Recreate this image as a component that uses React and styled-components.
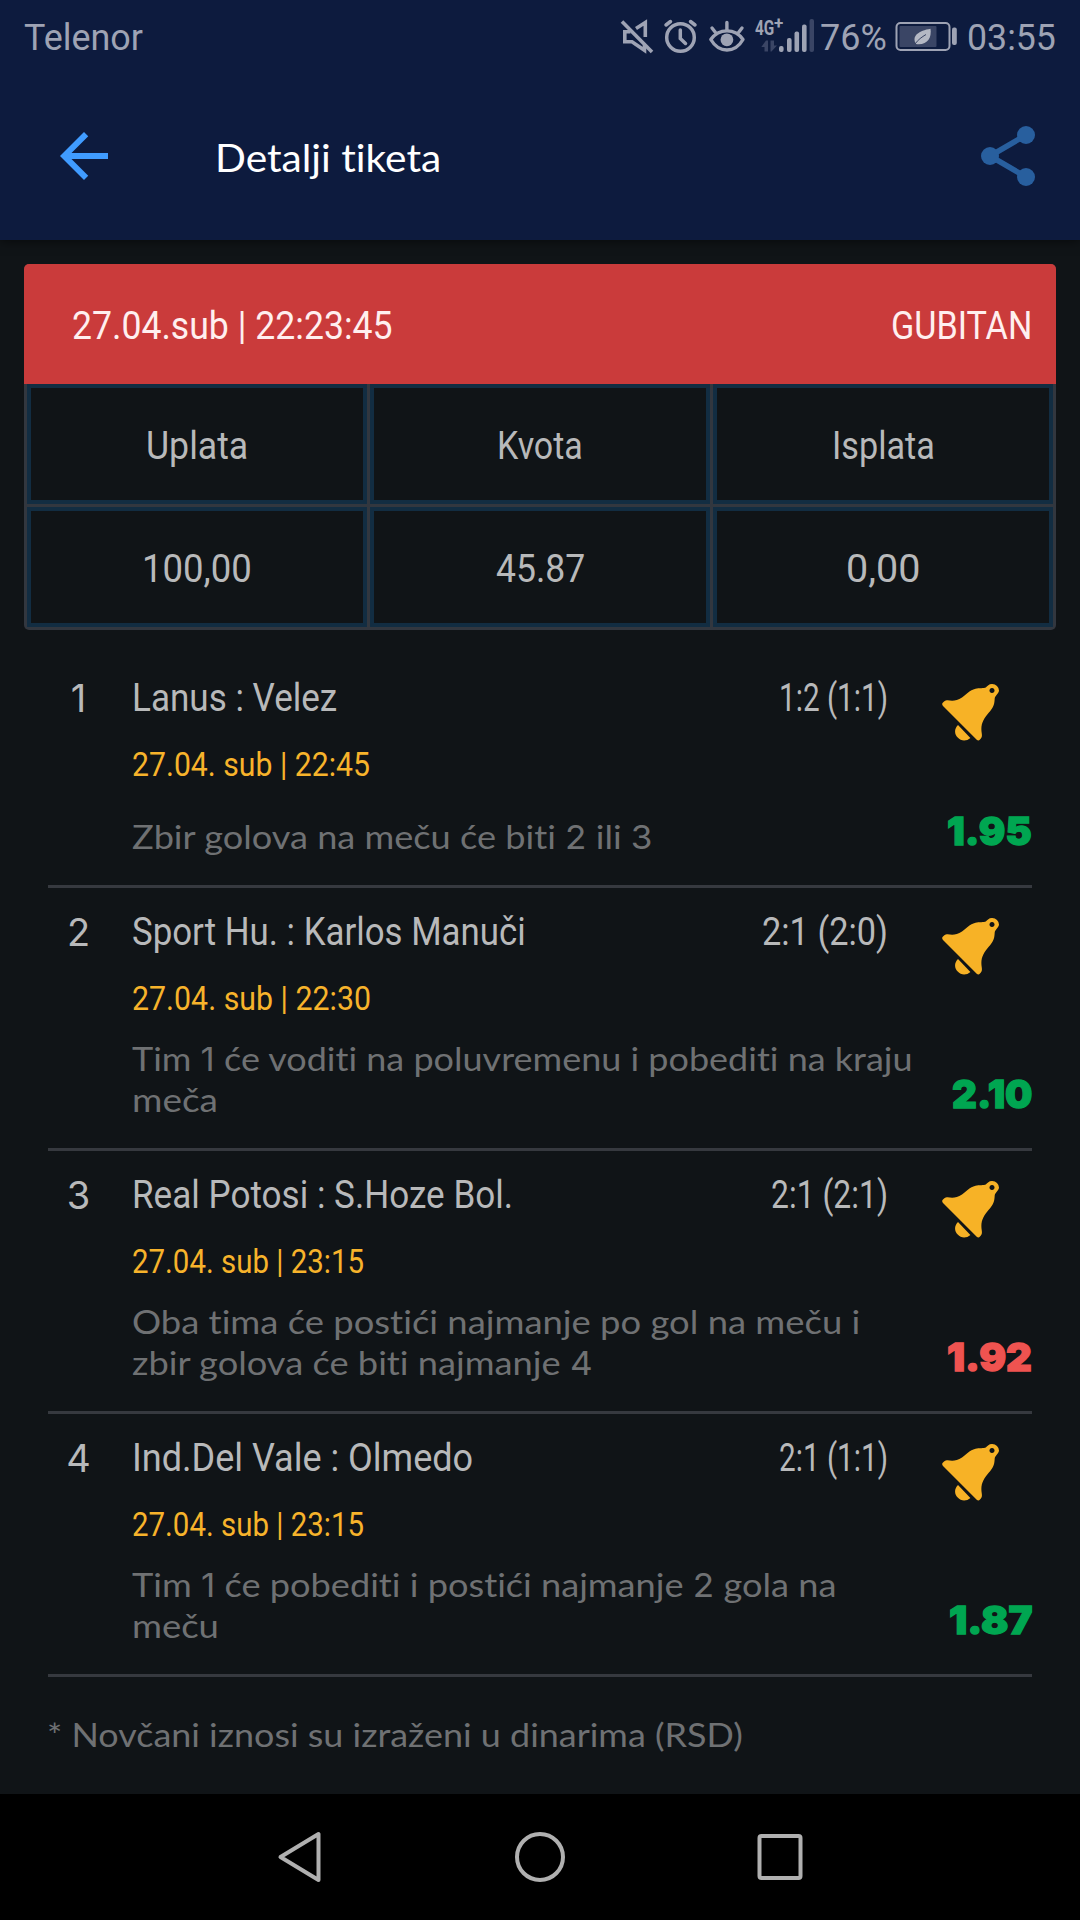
import React, { useLayoutEffect, useRef, useState } from "react";
import styled, { createGlobalStyle } from "styled-components";

const GlobalStyle = createGlobalStyle`
  * { box-sizing: border-box; }
  html, body { margin: 0; background: #101417; }
  body {
    font-family: Roboto, "Open Sans", "Noto Sans", sans-serif;
    font-variant-ligatures: none;
  }
`;

const Screen = styled.div`
  width: 1080px;
  height: 1920px;
  display: flex;
  flex-direction: column;
  background: #101417;
  overflow: hidden;
`;

const Slot = styled.span`
  display: block;
  flex: none;
  height: ${(p) => p.$line}px;
  line-height: ${(p) => p.$line}px;
  text-align: left;
  white-space: nowrap;
`;

const Glyphs = styled.span`
  display: inline-block;
  transform-origin: 0 50%;
`;

/* Sets a line of text to an exact measure, condensing or widening its letters. */
function Fitted({ width, line, children }) {
  const ref = useRef(null);
  const [scale, setScale] = useState(1);
  useLayoutEffect(() => {
    const fit = () => setScale(width / ref.current.offsetWidth);
    fit();
    document.fonts.ready.then(fit);
  }, [width]);
  return (
    <Slot $line={line} style={{ width }}>
      <Glyphs ref={ref} style={{ transform: `scaleX(${scale})` }}>
        {children}
      </Glyphs>
    </Slot>
  );
}

const Header = styled.header`
  height: 240px;
  flex: none;
  background: #0d1b3e;
  box-shadow: 0 1px 10px rgba(0, 0, 0, 0.55);
`;

const StatusBar = styled.div`
  height: 72px;
  padding: 0 24px;
  display: flex;
  align-items: center;
  justify-content: space-between;
  font-size: 36.5px;
  color: #9ea3b4;
`;

const StatusText = styled.div`
  padding-top: 4px;
`;

const StatusIcons = styled.div`
  display: flex;
  align-items: center;
`;

const ToolBar = styled.div`
  height: 168px;
  display: flex;
  align-items: center;
  padding: 0 44px 0 48px;
`;

const Title = styled.h1`
  flex: 1;
  margin: 1px 0 0 95px;
  font: 400 38.5px Lato, "Open Sans", sans-serif;
  font-variant-ligatures: none;
  color: #fff;
`;

const Card = styled.section`
  margin: 24px 24px 0;
  flex: none;
  border-radius: 5px;
  overflow: hidden;
  background: #32373f;
`;

const CardHead = styled.div`
  height: 120px;
  padding: 4px 24px 0 48px;
  display: flex;
  align-items: center;
  justify-content: space-between;
  background: #ca3b3b;
  color: #ffefef;
  font-size: 39.5px;
`;

const Grid = styled.div`
  display: grid;
  grid-template-columns: repeat(3, 340px);
  grid-auto-rows: 120px;
  gap: 3px;
  padding: 0 3px 3px;
`;

const Cell = styled.div`
  display: flex;
  align-items: center;
  justify-content: center;
  padding-top: 4px;
  border: 4px solid #122d42;
  background: #101417;
  color: #b8b9ba;
  font-size: 39.5px;
`;

const List = styled.div`
  margin: 24px 48px 0;
  flex: none;
`;

const Row = styled.article`
  min-height: ${(p) => (p.$tall ? 263 : 234)}px;
  border-bottom: 3px solid #36393f;
  display: flex;
`;

const Index = styled.div`
  width: 84px;
  padding: 20px 24px 0 1px;
  text-align: center;
  font-family: Inter, Roboto, sans-serif;
  font-size: 38px;
  line-height: 48px;
  color: #b8b9ba;
`;

const Main = styled.div`
  flex: 1;
  display: flex;
  flex-direction: column;
  padding: 20px 0 28px;
`;

const MatchLine = styled.div`
  display: flex;
  justify-content: space-between;
  width: 756px;
  font-size: 39.5px;
  color: #b8b9ba;
`;

const Kickoff = styled.div`
  margin-top: 18px;
  font-size: 34px;
  color: #f7b32b;
`;

const Bet = styled.div`
  margin-top: auto;
  font-family: Lato, "Open Sans", sans-serif;
  font-size: 33.5px;
  color: #6f7173;
`;

const Digit = styled.span`
  font-family: Inter, Roboto, sans-serif;
  font-size: 0.97em;
`;

const Side = styled.div`
  width: 90px;
  display: flex;
  flex-direction: column;
  align-items: flex-end;
  justify-content: space-between;
  padding: 30px 0 30px;
`;

const BellBox = styled.div`
  width: 90px;
  height: 57px;
`;

const Odds = styled.div`
  font-family: Inter, Roboto, sans-serif;
  font-weight: 900;
  font-size: 38px;
  -webkit-text-stroke: 1.3px currentColor;
  color: ${(p) => (p.$lost ? "#ef5350" : "#00a651")};
`;

const Note = styled.footer`
  margin: 37px 47px 0;
  flex: 1;
  font-family: Lato, "Open Sans", sans-serif;
  font-size: 33.5px;
  color: #6f7173;
`;

const NavBar = styled.nav`
  height: 126px;
  flex: none;
  display: flex;
  justify-content: center;
  gap: 190px;
  align-items: center;
  background: #000;
`;

const Bell = () => (
  <svg width="57" height="57" viewBox="0 0 57 57" fill="#f7b226">
    <path
      fillRule="evenodd"
      d="M1 18.5 C-.2 19.6 0 20.8 1 21.9 L34.7 55.7 C35.8 56.8 37 56.7 38 55.6 C40 53.6 40.2 52 39.7 49 C38.2 40 42 34.2 46.5 29 C52 23 52.400 20 52.700 14.500 C53 11.500 57 9.500 57 6.500 A6.700 6.700 0 0 0 50.300 0 C47 -.1 45.700 1.800 43.800 3.600 C42 4.500 37 4 33.500 4.700 C27.500 6 24.500 10.500 20 13.500 C14.500 17 10.500 17 5.500 16.200 C3.500 15.900 2.200 17.200 1 18.500 Z M50 4 a2.500 2.500 0 1 0 .01 0 Z"
    />
    <path d="M16 41 L28.400 54 C24.500 57.500 19 57.300 15.700 53.600 C12.300 50 12 45 16 41 Z" />
  </svg>
);

const MuteIcon = () => (
  <svg width="36" height="36" viewBox="619 18 36 36" fill="none" stroke="#9ea3b4" strokeWidth="3.6">
    <path d="M622 21.500 L652 52" />
    <path d="M630.500 31.800 H624.800 V41.800 H632 L644.500 50.300 V45" />
    <path d="M636 28.600 L645.300 22.500 V37" />
  </svg>
);

const AlarmIcon = () => (
  <svg width="36" height="36" viewBox="662 18 36 36" fill="none" stroke="#9ea3b4" strokeWidth="3.500" strokeLinecap="round">
    <circle cx="680.500" cy="37.500" r="13.800" />
    <path d="M680.300 30 V38.500 L685.500 43.500 M666 25 L670.500 21.500 M695 25 L690.500 21.500" />
  </svg>
);

const EyeIcon = () => (
  <svg width="40" height="36" viewBox="707 18 40 36" fill="none" stroke="#9ea3b4" strokeWidth="3.400" strokeLinecap="round">
    <path d="M710.800 39.500 C719 28 735 28 743 39.500 C735 53.500 719 53.500 710.800 39.500 Z" strokeLinejoin="round" />
    <circle cx="726.900" cy="39.800" r="6.400" fill="#9ea3b4" stroke="none" />
    <path d="M726.900 22.500 V30 M712 28 L715.500 32.500 M742 28 L738.500 32.500" />
  </svg>
);

const SignalBox = styled.div`
  position: relative;
  width: 62px;
  height: 36px;
`;

const NetworkLabel = styled.span`
  position: absolute;
  left: 2px;
  top: -1px;
  display: flex;
  font-size: 21px;
  font-weight: 700;
`;

const Plus = styled.span`
  font-size: 17px;
  line-height: 8px;
`;

const SignalIcon = () => (
  <svg width="62" height="36" viewBox="753 18 62 36" fill="#9ea3b4">
    <rect x="779" y="46" width="4.600" height="6" rx="2" />
    <rect x="787" y="38" width="4.600" height="14" rx="2" />
    <rect x="794.500" y="31.500" width="4.600" height="20.500" rx="2" />
    <rect x="802" y="24.500" width="4.600" height="27.500" rx="2" />
    <g fill="#3a4565">
      <rect x="809.500" y="19" width="4.500" height="33" rx="2" />
      <path d="M761.300 47 L766 40.500 H768 V51.500 H764.500 V47 Z M770.500 40.500 H774 V45.500 H777 L771.500 51.500 H770.500 Z" />
    </g>
  </svg>
);

const BatteryIcon = () => (
  <svg width="64" height="36" viewBox="894 18 64 36">
    <rect x="896.500" y="23" width="53" height="27" rx="4" fill="none" stroke="#9ea3b4" strokeWidth="2" />
    <rect x="899.500" y="26" width="37" height="21" rx="1" fill="#3a4565" />
    <rect x="952" y="27.500" width="4.800" height="17.500" rx="2" fill="#9ea3b4" />
    <path d="M930.500 28.700 C919 30.500 911 36 916 44 C927 45.500 932 38 930.500 28.700 Z" fill="#b4b8c4" />
    <path d="M914.700 44.500 C918 39.500 922 37 926 34.500" fill="none" stroke="#3a4565" strokeWidth="1" />
  </svg>
);

const BackIcon = () => (
  <svg width="72" height="72" viewBox="0 0 24 24" fill="#409cff">
    <path d="M20 11H7.830l5.590-5.590L12 4l-8 8 8 8 1.410-1.410L7.830 13H20v-2z" />
  </svg>
);

const ShareIcon = () => (
  <svg width="56" height="62" viewBox="980 125 56 62" fill="#285f9e">
    <path d="M1026 135 L990 156 L1026 177" fill="none" stroke="#285f9e" strokeWidth="5.600" />
    <circle cx="1026" cy="135" r="9" />
    <circle cx="990" cy="156" r="9" />
    <circle cx="1026" cy="177" r="9" />
  </svg>
);

const NavIcon = ({ children }) => (
  <svg width="50" height="54" viewBox="0 0 50 54" fill="none" stroke="#b0b0b0" strokeWidth="4" strokeLinejoin="round">
    {children}
  </svg>
);

const withDigits = (text) =>
  text.split(/(\d)/).map((part, i) => (/\d/.test(part) ? <Digit key={i}>{part}</Digit> : part));

const summary = [
  ["Uplata", 102],
  ["Kvota", 86],
  ["Isplata", 103],
  ["100,00", 110],
  ["45.87", 89],
  ["0,00", 74],
];

const matches = [
  {
    teams: ["Lanus : Velez", 205],
    score: ["1:2 (1:1)", 109],
    time: ["27.04. sub | 22:45", 238],
    bet: [["Zbir golova na meču će biti 2 ili 3", 520]],
    odds: ["1.95", 85],
  },
  {
    teams: ["Sport Hu. : Karlos Manuči", 394],
    score: ["2:1 (2:0)", 126],
    time: ["27.04. sub | 22:30", 239],
    bet: [["Tim 1 će voditi na poluvremenu i pobediti na kraju", 780], ["meča", 86]],
    odds: ["2.10", 80],
  },
  {
    teams: ["Real Potosi : S.Hoze Bol.", 381],
    score: ["2:1 (2:1)", 117],
    time: ["27.04. sub | 23:15", 232],
    bet: [["Oba tima će postići najmanje po gol na meču i", 728], ["zbir golova će biti najmanje 4", 461]],
    odds: ["1.92", 85],
    lost: true,
  },
  {
    teams: ["Ind.Del Vale : Olmedo", 341],
    score: ["2:1 (1:1)", 109],
    time: ["27.04. sub | 23:15", 232],
    bet: [["Tim 1 će pobediti i postići najmanje 2 gola na", 704], ["meču", 87]],
    odds: ["1.87", 83],
  },
];

const Gap = styled.i`
  width: ${(p) => p.$w}px;
`;

export default function App() {
  return (
    <Screen>
      <GlobalStyle />
      <Header>
        <StatusBar>
          <StatusText>
            <Fitted width={119} line={44}>Telenor</Fitted>
          </StatusText>
          <StatusIcons>
            <MuteIcon />
            <Gap $w={7} />
            <AlarmIcon />
            <Gap $w={9} />
            <EyeIcon />
            <Gap $w={6} />
            <SignalBox>
              <SignalIcon />
              <NetworkLabel>
                <Fitted width={19} line={22}>4G</Fitted>
                <Plus>
                  <Fitted width={9} line={13}>+</Fitted>
                </Plus>
              </NetworkLabel>
            </SignalBox>
            <Gap $w={5} />
            <StatusText>
              <Fitted width={67} line={44}>76%</Fitted>
            </StatusText>
            <Gap $w={7} />
            <BatteryIcon />
            <Gap $w={9} />
            <StatusText>
              <Fitted width={89} line={44}>03:55</Fitted>
            </StatusText>
          </StatusIcons>
        </StatusBar>
        <ToolBar>
          <BackIcon />
          <Title>
            <Fitted width={226} line={48}>Detalji tiketa</Fitted>
          </Title>
          <ShareIcon />
        </ToolBar>
      </Header>

      <Card>
        <CardHead>
          <Fitted width={321} line={48}>27.04.sub | 22:23:45</Fitted>
          <Fitted width={141} line={48}>GUBITAN</Fitted>
        </CardHead>
        <Grid>
          {summary.map(([text, width]) => (
            <Cell key={text}>
              <Fitted width={width} line={48}>{text}</Fitted>
            </Cell>
          ))}
        </Grid>
      </Card>

      <List>
        {matches.map((m, i) => (
          <Row key={i} $tall={m.bet.length > 1}>
            <Index>{i + 1}</Index>
            <Main>
              <MatchLine>
                <Fitted width={m.teams[1]} line={48}>{m.teams[0]}</Fitted>
                <Fitted width={m.score[1]} line={48}>{m.score[0]}</Fitted>
              </MatchLine>
              <Kickoff>
                <Fitted width={m.time[1]} line={48}>{m.time[0]}</Fitted>
              </Kickoff>
              <Bet>
                {m.bet.map(([text, width]) => (
                  <Fitted key={text} width={width} line={41}>{withDigits(text)}</Fitted>
                ))}
              </Bet>
            </Main>
            <Side>
              <BellBox>
                <Bell />
              </BellBox>
              <Odds $lost={m.lost}>
                <Fitted width={m.odds[1]} line={48}>{m.odds[0]}</Fitted>
              </Odds>
            </Side>
          </Row>
        ))}
      </List>
      <Note>
        <Fitted width={696} line={41}>* Novčani iznosi su izraženi u dinarima (RSD)</Fitted>
      </Note>

      <NavBar>
        <NavIcon>
          <path d="M5.500 27 L43.500 4 V50 Z" />
        </NavIcon>
        <NavIcon>
          <circle cx="25" cy="27" r="23" />
        </NavIcon>
        <NavIcon>
          <rect x="4.500" y="6" width="41" height="42" rx="2" />
        </NavIcon>
      </NavBar>
    </Screen>
  );
}
